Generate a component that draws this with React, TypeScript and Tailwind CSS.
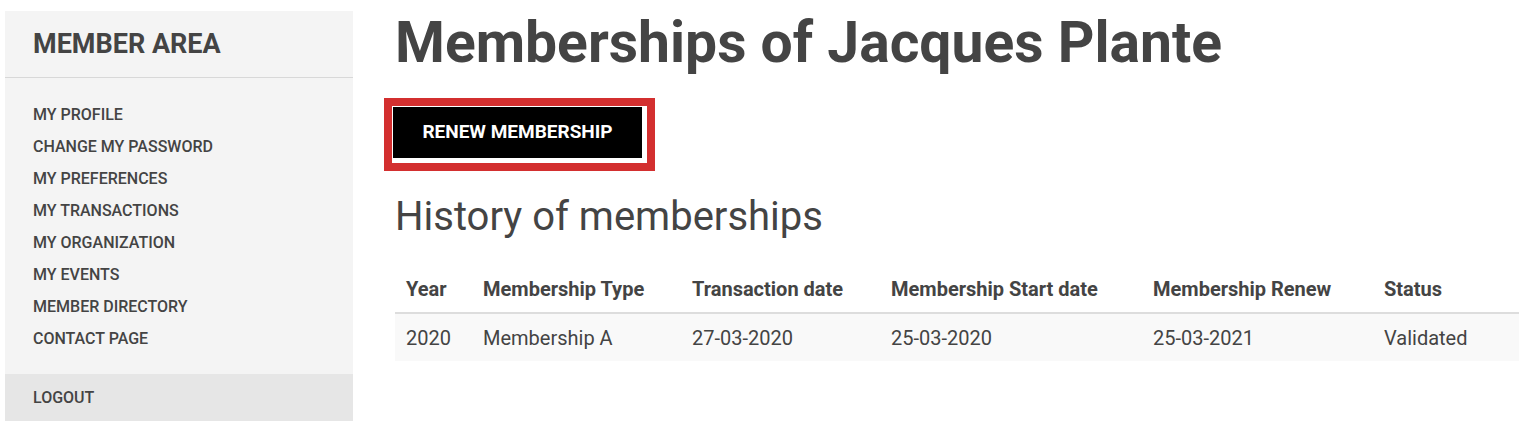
import React from "react";

const menu = [
  "MY PROFILE",
  "CHANGE MY PASSWORD",
  "MY PREFERENCES",
  "MY TRANSACTIONS",
  "MY ORGANIZATION",
  "MY EVENTS",
  "MEMBER DIRECTORY",
  "CONTACT PAGE",
];

const cols = [
  { h: "Year", v: "2020", w: "w-[77px]" },
  { h: "Membership Type", v: "Membership A", w: "w-[209px]" },
  { h: "Transaction date", v: "27-03-2020", w: "w-[199px]" },
  { h: "Membership Start date", v: "25-03-2020", w: "w-[262px]" },
  { h: "Membership Renew", v: "25-03-2021", w: "w-[231px]" },
  { h: "Status", v: "Validated", w: "w-[146px]" },
];

export default function App() {
  return (
    <div className="flex bg-white pl-[5px] pt-[11px] text-[#444] [font-family:Roboto,'Liberation_Sans',sans-serif] min-h-[431px]">
      <aside className="w-[348px] shrink-0 bg-[#f4f4f4] flex flex-col h-[410px]">
        <div className="h-[67px] border-b border-[#d8d8d8] px-[28px] flex items-center">
          <h2 className="text-[27px] font-bold text-[#444] leading-none">MEMBER AREA</h2>
        </div>
        <nav className="flex flex-col px-[28px] pt-[21px]">
          {menu.map((m) => (
            <a key={m} className="h-[32px] flex items-center text-[16px] font-medium text-[#444] leading-none">
              {m}
            </a>
          ))}
        </nav>
        <div className="mt-auto h-[47px] bg-[#e6e6e6] px-[28px] flex items-center text-[16px] font-medium text-[#444]">
          LOGOUT
        </div>
      </aside>
      <main className="ml-[42px] flex flex-col">
        <h1 className="text-[57px] font-bold leading-none mt-[3px] text-[#444]">
          Memberships of Jacques Plante
        </h1>
        <div className="mt-[27px] -ml-[11px] w-[271px] h-[73px] border-[8px] border-[#d32f2f] bg-white flex">
          <button className="ml-[1px] mt-[1px] w-[249px] h-[51px] bg-black text-white text-[19px] font-bold flex items-center justify-center">
            RENEW MEMBERSHIP
          </button>
        </div>
        <h2 className="text-[40px] font-normal leading-none mt-[26px] text-[#444]">History of memberships</h2>
        <div className="mt-[28px] flex flex-col">
          <div className="flex h-[49px] border-b-2 border-[#ddd]">
            {cols.map((c) => (
              <div key={c.h} className={`${c.w} px-[11px] flex items-center text-[20px] font-bold text-[#444]`}>
                {c.h}
              </div>
            ))}
          </div>
          <div className="flex h-[47px] bg-[#f9f9f9]">
            {cols.map((c) => (
              <div key={c.h} className={`${c.w} px-[11px] flex items-center text-[20px] text-[#444]`}>
                {c.v}
              </div>
            ))}
          </div>
        </div>
      </main>
    </div>
  );
}
